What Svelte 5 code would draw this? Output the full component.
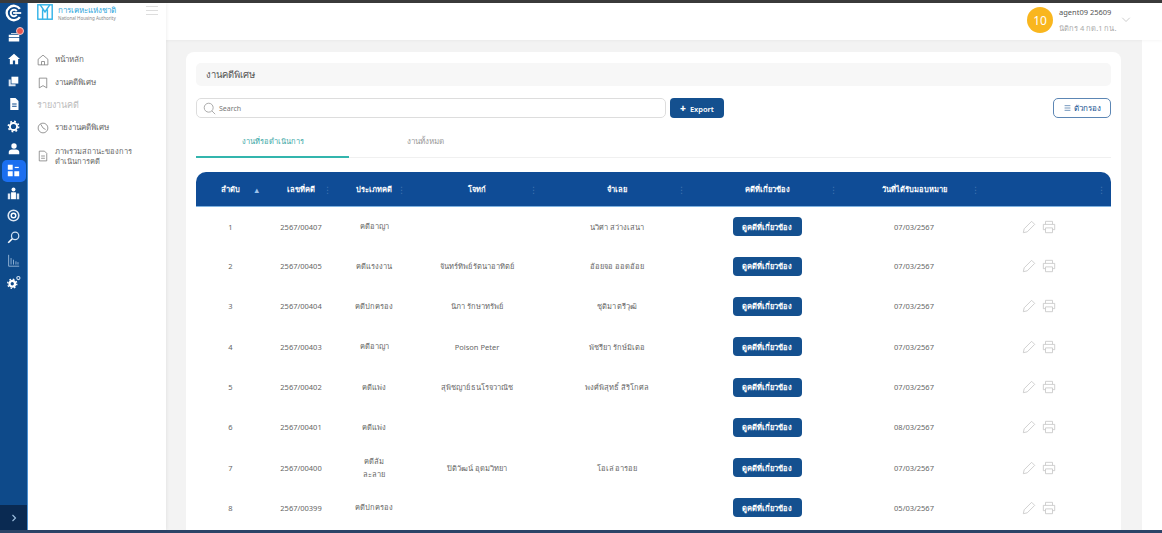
<script>
  const rows = [
    { no: 1, id: '2567/00407', type: ['คดีอาญา'], plaintiff: '', defendant: 'นวิศา สว่างเสนา', date: '07/03/2567' },
    { no: 2, id: '2567/00405', type: ['คดีแรงงาน'], plaintiff: 'จันทร์ทิพย์ รัตนาอาทิตย์', defendant: 'อ้อยจอ ออดอ้อย', date: '07/03/2567' },
    { no: 3, id: '2567/00404', type: ['คดีปกครอง'], plaintiff: 'นิภา รักษาทรัพย์', defendant: 'ชุติมา ตรีวุฒิ', date: '07/03/2567' },
    { no: 4, id: '2567/00403', type: ['คดีอาญา'], plaintiff: 'Poison Peter', defendant: 'พัชรียา รักษ์มิเตอ', date: '07/03/2567' },
    { no: 5, id: '2567/00402', type: ['คดีแพ่ง'], plaintiff: 'สุพิชญาย์ ธนโรจวาณิช', defendant: 'พงศ์พิสุทธิ์ สิริโกศล', date: '07/03/2567' },
    { no: 6, id: '2567/00401', type: ['คดีแพ่ง'], plaintiff: '', defendant: '', date: '08/03/2567' },
    { no: 7, id: '2567/00400', type: ['คดีล้ม', 'ละลาย'], plaintiff: 'ปิติวัฒน์ อุดมวิทยา', defendant: 'โอเล่ อารอย', date: '07/03/2567' },
    { no: 8, id: '2567/00399', type: ['คดีปกครอง'], plaintiff: '', defendant: '', date: '05/03/2567' }
  ];
  const heads = ['ลำดับ', 'เลขที่คดี', 'ประเภทคดี', 'โจทก์', 'จำเลย', 'คดีที่เกี่ยวข้อง', 'วันที่ได้รับมอบหมาย', ''];
</script>

<div class="page">
  <div class="topline"></div>
  <div class="body">
    <nav class="rail">
      <div class="brand">
        <svg viewBox="0 0 20 20" width="18" height="18"><path d="M16.500 5.500A8 8 0 1 0 16.500 14.500" fill="none" stroke="#fff" stroke-width="2.600"/><path d="M13 8A3.600 3.600 0 1 0 13 12" fill="none" stroke="#fff" stroke-width="2.200"/><path d="M9 10h9" stroke="#fff" stroke-width="2"/></svg>
      </div>
      <div class="ri">
        <svg viewBox="0 0 16 16" width="12" height="12"><path d="M1 5h14v3H1zM1 9h14v5H1zM4 3h8v1H4z" fill="#fff"/></svg>
        <span class="badge"></span>
      </div>
      <div class="ri"><svg viewBox="0 0 16 16" width="12" height="12"><path d="M8 1 0 8h2.500v7h4v-5h3v5h4V8H16z" fill="#fff"/></svg></div>
      <div class="ri"><svg viewBox="0 0 16 16" width="11" height="11"><path d="M5 1h10v10H5z" fill="#fff"/><path d="M1 5h3v7h7v3H1z" fill="#dce6f2"/></svg></div>
      <div class="ri"><svg viewBox="0 0 16 16" width="12" height="12"><path d="M3 0h7l4 4v12H3z" fill="#fff"/><path d="M5.500 8h6M5.500 11h6" stroke="#0d4a8c" stroke-width="1.400"/></svg></div>
      <div class="ri"><svg viewBox="0 0 16 16" width="13" height="13"><circle cx="8" cy="8" r="4.400" fill="none" stroke="#fff" stroke-width="2.400"/><circle cx="8" cy="8" r="6.300" fill="none" stroke="#fff" stroke-width="2" stroke-dasharray="2.200 2.750"/></svg></div>
      <div class="ri"><svg viewBox="0 0 16 16" width="12" height="12"><circle cx="8" cy="4" r="3.600" fill="#fff"/><path d="M1 15v-3c0-2 2-3.500 4-3.500h6c2 0 4 1.500 4 3.500v3z" fill="#fff"/></svg></div>
      <div class="ri active"><svg viewBox="0 0 16 16" width="13" height="13"><path d="M1 1h6v6H1zM1 9h6v6H1zM9 9h6v6H9z" fill="#fff"/><path d="M9.500 3.500h5v1.500h-5z" fill="#fff"/></svg></div>
      <div class="ri"><svg viewBox="0 0 16 16" width="13" height="13"><circle cx="8" cy="3" r="2.400" fill="#fff"/><path d="M5 6.500h6V15H5z" fill="#fff"/><path d="M1 8h3v7H1zM12 8h3v7h-3z" fill="#dce6f2"/></svg></div>
      <div class="ri"><svg viewBox="0 0 16 16" width="13" height="13"><circle cx="8" cy="8" r="6.500" fill="none" stroke="#dce6f2" stroke-width="2"/><circle cx="8" cy="8" r="2.800" fill="none" stroke="#fff" stroke-width="1.800"/></svg></div>
      <div class="ri"><svg viewBox="0 0 16 16" width="13" height="13"><circle cx="10" cy="6" r="4.500" fill="none" stroke="#cfe0f2" stroke-width="1.500"/><path d="M6.500 9.500 1.500 14.500" stroke="#fff" stroke-width="2"/></svg></div>
      <div class="ri"><svg viewBox="0 0 16 16" width="13" height="13"><path d="M2 1v14h13M5 13V5M8 13V7M11 13V9M13.500 13v-3" fill="none" stroke="#8fb0d2" stroke-width="1.200"/></svg></div>
      <div class="ri"><svg viewBox="0 0 16 16" width="14" height="14"><circle cx="6" cy="10" r="3.200" fill="none" stroke="#fff" stroke-width="2.600"/><circle cx="6" cy="10" r="5.200" fill="none" stroke="#fff" stroke-width="1.500" stroke-dasharray="1.800 2.300"/><circle cx="13" cy="3.500" r="1.800" fill="none" stroke="#cfe0f2" stroke-width="1.300"/></svg></div>
      <div class="rail-foot">
        <svg viewBox="0 0 8 10" width="6" height="8"><path d="M2 1l4 4-4 4" fill="none" stroke="#9fc0e0" stroke-width="1.500"/></svg>
      </div>
    </nav>

    <aside class="side">
      <div class="logo-row">
        <svg class="logo" viewBox="0 0 20 20" width="16" height="16"><rect x="1" y="1" width="18" height="18" fill="none" stroke="#35b4e8" stroke-width="1.800"/><path d="M4 1l6 9 6-9M7 7v12M13 7v12" fill="none" stroke="#35b4e8" stroke-width="1.800"/></svg>
        <div class="logo-text">
          <div class="logo-th">การเคหะแห่งชาติ</div>
          <div class="logo-en">National Housing Authority</div>
        </div>
        <div class="burger"><i></i><i></i><i></i></div>
      </div>
      <ul class="menu">
        <li><svg viewBox="0 0 16 16" width="12" height="12"><path d="M1.500 7 8 1.500 14.500 7v7.500h-13z M6 14.500V10h4v4.500" class="ms"/></svg>หน้าหลัก</li>
        <li><svg viewBox="0 0 16 16" width="12" height="12"><path d="M3 1.500h10v13l-5-3-5 3z" class="ms"/></svg>งานคดีพิเศษ</li>
        <li class="group">รายงานคดี</li>
        <li><svg viewBox="0 0 16 16" width="12" height="12"><circle cx="8" cy="8" r="6.500" class="ms"/><path d="M5 3 8 8l3.500 2" class="ms"/></svg>รายงานคดีพิเศษ</li>
        <li class="two"><svg viewBox="0 0 16 16" width="12" height="12"><path d="M3 1.500h7l3 3v10H3z M5.500 8h5M5.500 11h5" class="ms"/></svg><span>ภาพรวมสถานะของการดำเนินการคดี</span></li>
      </ul>
    </aside>

    <div class="main">
      <header class="head">
        <div class="avatar">10</div>
        <div class="who">
          <div class="uname">agent09 25609</div>
          <div class="urole">นิติกร 4 กด.1 กน.</div>
        </div>
        <svg viewBox="0 0 12 8" width="10" height="6"><path d="M1 1l5 5 5-5" fill="none" stroke="#bbb" stroke-width="1"/></svg>
      </header>

      <div class="content">
        <section class="card">
          <div class="title">งานคดีพิเศษ</div>

          <div class="tools">
            <div class="search">
              <svg viewBox="0 0 16 16" width="13" height="13"><circle cx="7" cy="7" r="5.500" fill="none" stroke="#999" stroke-width="1"/><path d="M11 11l4 4" stroke="#999" stroke-width="1"/></svg>
              <span>Search</span>
            </div>
            <button class="export"><b>+</b> Export</button>
            <button class="filter">
              <svg viewBox="0 0 12 10" width="7" height="6"><path d="M1 1h10M1 5h10M1 9h10" stroke="#14508f" stroke-width="1"/></svg>
              ตัวกรอง
            </button>
          </div>

          <div class="tabs">
            <div class="tab on">งานที่รอดำเนินการ</div>
            <div class="tab">งานทั้งหมด</div>
          </div>

          <table>
            <colgroup>
              <col style="width:69px" /><col style="width:72px" /><col style="width:74px" /><col style="width:132px" />
              <col style="width:148px" /><col style="width:152px" /><col style="width:142px" /><col style="width:126px" />
            </colgroup>
            <thead>
              <tr>
                {#each heads as h, i}
                  <th>{h}<span class="sort" class:first={i === 0}>{i === 0 ? '▴' : '⋮'}</span></th>
                {/each}
              </tr>
            </thead>
            <tbody>
              {#each rows as r}
                <tr>
                  <td>{r.no}</td>
                  <td>{r.id}</td>
                  <td>
                    {#each r.type as line}
                      <div class="type">{line}</div>
                    {/each}
                  </td>
                  <td>{r.plaintiff}</td>
                  <td>{r.defendant}</td>
                  <td><button class="rel">ดูคดีที่เกี่ยวข้อง</button></td>
                  <td>{r.date}</td>
                  <td>
                    <div class="acts">
                      <svg viewBox="0 0 16 16" width="14" height="14"><path d="M11 1.500 14.500 5 6 13.500 1.500 14.500 2.500 10z" fill="none" stroke="#c9c9c9" stroke-width="1"/></svg>
                      <svg viewBox="0 0 16 16" width="14" height="14"><path d="M4 5V1.500h8V5M4 11H1.500V5h13v6H12M4 9h8v5.500H4z" fill="none" stroke="#c9c9c9" stroke-width="1"/></svg>
                    </div>
                  </td>
                </tr>
              {/each}
            </tbody>
          </table>
        </section>
      </div>
    </div>
  </div>
  <div class="bottomline"></div>
</div>

<style>
  :global(body) {
    margin: 0;
    background: #fff;
  }
  .page {
    height: 533px;
    display: flex;
    flex-direction: column;
    overflow: hidden;
    font-family: "Noto Sans", "DejaVu Sans", "Liberation Sans", sans-serif;
    color: #555;
  }
  .topline {
    height: 3px;
    background: #3a3a3a;
    flex: none;
  }
  .bottomline {
    height: 3px;
    background: #2b4468;
    flex: none;
  }
  .body {
    flex: 1;
    min-height: 0;
    display: flex;
  }
  .rail {
    width: 28px;
    flex: none;
    background: #0e4a8a;
    border-right: 1px solid #4f94d4;
    box-sizing: border-box;
    display: flex;
    flex-direction: column;
    align-items: center;
    position: relative;
  }
  .brand {
    height: 20px;
    margin-bottom: 3px;
    display: flex;
    align-items: center;
    justify-content: center;
  }
  .ri {
    width: 24px;
    height: 22.300px;
    display: flex;
    align-items: center;
    justify-content: center;
    position: relative;
    flex: none;
  }
  .badge {
    position: absolute;
    top: 1px;
    right: 2px;
    width: 8px;
    height: 8px;
    border-radius: 50%;
    background: #e8574f;
    border: 1px solid #f3c9c6;
    box-sizing: border-box;
  }
  .active {
    background: #1b6ff0;
    border-radius: 5px;
  }
  .rail-foot {
    margin-top: auto;
    width: 100%;
    height: 25px;
    background: #0a2a52;
    display: flex;
    align-items: center;
    justify-content: center;
  }
  .side {
    width: 138px;
    flex: none;
    background: #fff;
    box-shadow: 1px 0 3px rgba(0, 0, 0, 0.06);
    z-index: 1;
    padding: 1px 8px 0 9px;
    box-sizing: border-box;
  }
  .logo-row {
    display: flex;
    align-items: flex-start;
    gap: 5px;
    height: 38px;
  }
  .logo-text {
    flex: 1;
    white-space: nowrap;
  }
  .logo-th {
    font-size: 8px;
    font-weight: 500;
    line-height: 9px;
    color: #2ea6dc;
    margin-top: 1px;
  }
  .logo-en {
    font-size: 4.500px;
    line-height: 8px;
    color: #888;
  }
  .burger {
    display: flex;
    flex-direction: column;
    gap: 3px;
    margin-top: 2px;
  }
  .burger i {
    display: block;
    width: 12px;
    height: 1px;
    background: #ddd;
  }
  .menu {
    list-style: none;
    margin: 6px 0 0;
    padding: 0;
    font-size: 8px;
    color: #666;
  }
  .menu li {
    display: flex;
    align-items: center;
    gap: 6px;
    height: 23px;
  }
  .menu li.group {
    color: #bdbdbd;
    font-size: 9px;
    height: 22px;
  }
  .menu li.two {
    height: 34px;
    font-size: 7.500px;
    line-height: 10.500px;
  }
  .menu span {
    width: 78px;
  }
  .menu svg {
    flex: none;
  }
  .ms {
    fill: none;
    stroke: #777;
    stroke-width: 1;
  }
  .main {
    flex: 1;
    min-width: 0;
    display: flex;
    flex-direction: column;
  }
  .head {
    height: 37px;
    flex: none;
    box-sizing: border-box;
    background: #fff;
    display: flex;
    justify-content: flex-end;
    align-items: center;
    gap: 6px;
    padding: 0 31px 3px 0;
    position: relative;
    box-shadow: 0 1px 3px rgba(0, 0, 0, 0.04);
  }
  .avatar {
    width: 26px;
    height: 26px;
    border-radius: 50%;
    background: #f9b61e;
    color: #fff;
    font-size: 12px;
    display: flex;
    align-items: center;
    justify-content: center;
  }
  .who {
    width: 56px;
  }
  .uname {
    font-size: 7.500px;
    line-height: 11px;
    color: #555;
    white-space: nowrap;
  }
  .urole {
    font-size: 7.500px;
    line-height: 11px;
    margin-top: 5px;
    color: #aaa;
    white-space: nowrap;
  }
  .content {
    flex: 1;
    min-height: 0;
    background: #f3f3f3;
    margin-right: 20px;
    padding: 12px 21px 0 20px;
  }
  .card {
    background: #fff;
    border-radius: 8px 8px 0 0;
    height: 100%;
    box-sizing: border-box;
    padding: 11px 10px 0;
    overflow: hidden;
  }
  .title {
    height: 23px;
    background: #f7f7f7;
    border-radius: 5px;
    font-size: 9.500px;
    line-height: 23px;
    padding-left: 10px;
    color: #555;
  }
  .tools {
    display: flex;
    align-items: center;
    gap: 4px;
    margin-top: 12px;
  }
  .search {
    width: 462px;
    height: 18px;
    border: 1px solid #ddd;
    border-radius: 5px;
    display: flex;
    align-items: center;
    gap: 3px;
    padding-left: 6px;
    font-size: 7px;
    color: #777;
  }
  .export {
    width: 54px;
    height: 20px;
    background: #14508f;
    color: #fff;
    border: none;
    border-radius: 4px;
    font: inherit;
    font-size: 7.500px;
    font-weight: 600;
    padding: 0;
  }
  .export b {
    font-size: 10px;
    margin-right: 2px;
  }
  .filter {
    margin-left: auto;
    width: 58px;
    height: 20px;
    background: #fff;
    color: #14508f;
    border: 1px solid #5c86b4;
    border-radius: 5px;
    font: inherit;
    font-size: 8px;
    padding: 0;
    display: flex;
    align-items: center;
    justify-content: center;
    gap: 3px;
  }
  .tabs {
    display: flex;
    margin-top: 8px;
    border-bottom: 1px solid #f0f0f0;
    height: 31px;
  }
  .tab {
    width: 153px;
    text-align: center;
    font-size: 8px;
    line-height: 30px;
    color: #999;
    box-sizing: border-box;
  }
  .tab.on {
    color: #3aa8a6;
    font-size: 7.500px;
    border-bottom: 2px solid #33b5ad;
    height: 32px;
  }
  table {
    width: 915px;
    margin-top: 14px;
    border-collapse: separate;
    border-spacing: 0;
    table-layout: fixed;
    font-size: 7.500px;
    color: #666;
  }
  th {
    background: #0f4c96;
    color: #fff;
    height: 35px;
    padding: 0;
    font-size: 7.500px;
    font-weight: 700;
    position: relative;
    border-bottom: 1px solid #7fb2e0;
    box-sizing: border-box;
  }
  th:first-child {
    border-top-left-radius: 10px;
  }
  th:last-child {
    border-top-right-radius: 10px;
  }
  .sort {
    position: absolute;
    right: 5px;
    top: 11px;
    font-size: 9px;
    font-weight: 400;
    color: #3f74b0;
  }
  .sort.first {
    right: 6px;
    color: #9cc2ea;
  }
  td {
    height: 40.300px;
    padding: 0;
    text-align: center;
    box-sizing: border-box;
  }
  tbody tr:first-child td {
    height: 39px;
  }
  .type {
    line-height: 13px;
  }
  .rel {
    width: 69px;
    height: 19px;
    background: #14508f;
    color: #fff;
    border: none;
    border-radius: 4px;
    font: inherit;
    font-size: 7.500px;
    font-weight: 600;
    padding: 0;
  }
  .acts {
    display: flex;
    justify-content: center;
    gap: 6px;
    padding-right: 18px;
  }
</style>
